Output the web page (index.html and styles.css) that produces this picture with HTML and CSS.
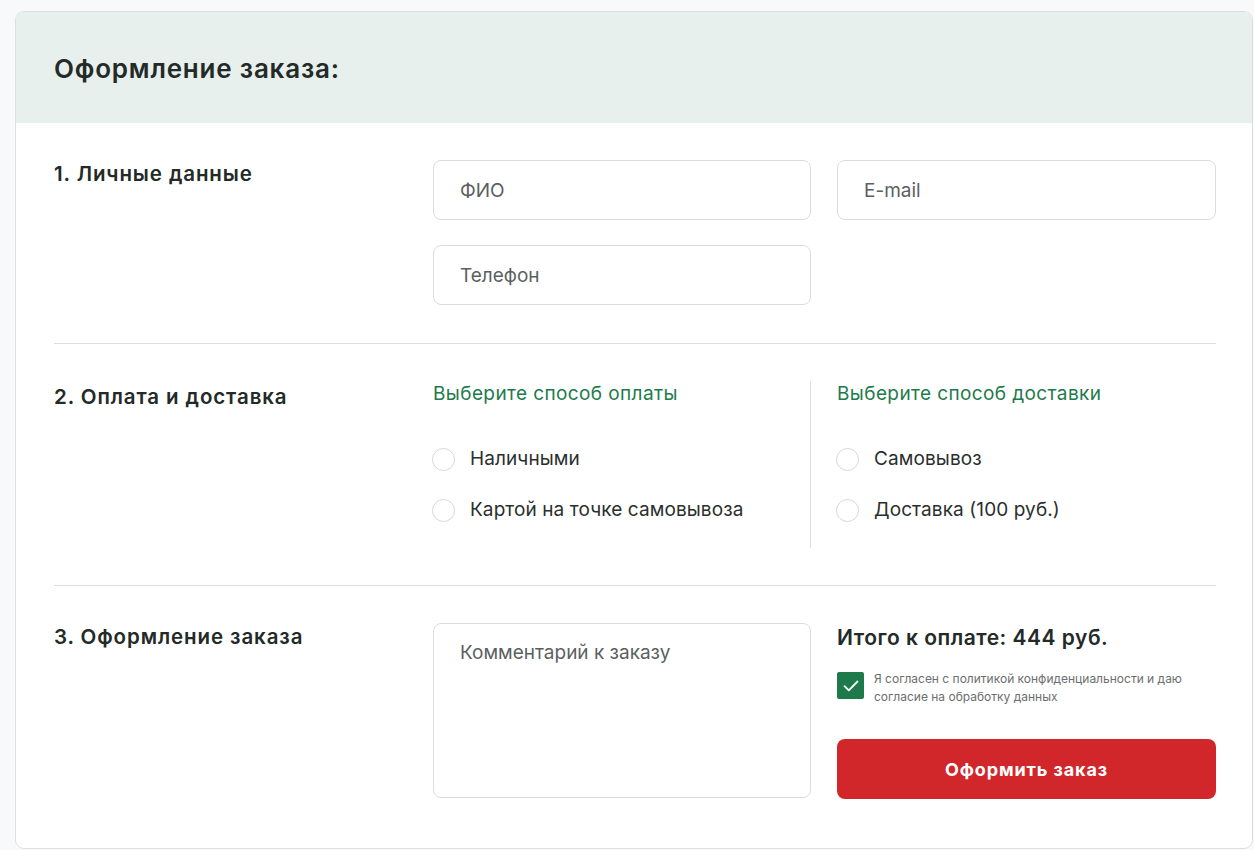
FILE: index.html
```html
<!DOCTYPE html>
<html lang="ru">
<head>
<meta charset="utf-8">
<title>Оформление заказа</title>
<link rel="stylesheet" href="styles.css">
</head>
<body>
<div class="card">
  <div class="card-head">
    <h1 class="title">Оформление заказа:</h1>
  </div>
  <div class="card-body">
    <section class="row row-first">
      <h2 class="row-label">1. Личные данные</h2>
      <div class="field">ФИО</div>
      <div class="field">E-mail</div>
      <div class="field">Телефон</div>
    </section>
    <section class="row row-mid">
      <h2 class="row-label">2. Оплата и доставка</h2>
      <div class="opt-col opt-left">
        <div class="opt-title">Выберите способ оплаты</div>
        <div class="opts">
          <div class="opt"><span class="radio"></span>Наличными</div>
          <div class="opt"><span class="radio"></span>Картой на точке самовывоза</div>
        </div>
      </div>
      <div class="opt-col">
        <div class="opt-title">Выберите способ доставки</div>
        <div class="opts">
          <div class="opt"><span class="radio"></span>Самовывоз</div>
          <div class="opt"><span class="radio"></span>Доставка (100 руб.)</div>
        </div>
      </div>
    </section>
    <section class="row row-last">
      <h2 class="row-label">3. Оформление заказа</h2>
      <div class="field textarea">Комментарий к заказу</div>
      <div class="summary">
        <div class="total">Итого к оплате: 444 руб.</div>
        <div class="agree">
          <span class="check"><svg width="16" height="12" viewBox="0 0 16 12"><path d="M1.5 6.2 L5.8 10.3 L14.5 1.5" fill="none" stroke="#fff" stroke-width="1.8" stroke-linecap="round" stroke-linejoin="round"/></svg></span>
          <span class="agree-text">Я согласен с политикой конфиденциальности и даю согласие на обработку данных</span>
        </div>
        <button class="submit">Оформить заказ</button>
      </div>
    </section>
  </div>
</div>
</body>
</html>
```
FILE: styles.css
```css
* { box-sizing: border-box; }
html, body { margin: 0; padding: 0; }
body {
  background: #f7f9fb;
  font-family: Inter, "Noto Sans", sans-serif;
  color: #262c2a;
  padding: 11px 1px 0 15px;
  height: 850px;
  overflow: hidden;
}
.card {
  background: #fff;
  border: 1px solid #dcdfe0;
  border-radius: 9px;
  overflow: hidden;
  height: 838px;
}
.card-head {
  background: #e7f0ec;
  height: 111px;
  padding: 0 38px;
  display: flex;
  align-items: center;
}
.title {
  margin: 0;
  font-size: 26px;
  font-weight: 600;
  letter-spacing: 0.8px;
  color: #232a27;
  padding-top: 2px;
}
.card-body {
  padding: 0 36px 0 38px;
}
.row {
  display: grid;
  grid-template-columns: 353px 378px 1fr;
  column-gap: 26px;
  row-gap: 25px;
  padding: 37px 0 38px;
  border-bottom: 1px solid #dcdfe0;
  align-items: start;
}
.row-mid { padding-bottom: 37px; }
.row-last { border-bottom: none; }
.row-label {
  margin: 0;
  font-size: 20.5px;
  font-weight: 600;
  color: #232a27;
  letter-spacing: 0.9px;
  line-height: 28px;
}
.row-first .row-label { grid-row: span 2; }
.field {
  height: 60px;
  border: 1px solid #dadcdd;
  border-radius: 8px;
  padding: 0 26px;
  display: flex;
  align-items: center;
  font-size: 19px;
  color: #5c5f5f;
  letter-spacing: 0;
}
.row-mid .row-label { margin-top: 2px; }
.opt-col { min-height: 167px; }
.opt-left { border-right: 1px solid #dcdfe0; }
.opt-title {
  font-size: 19px;
  color: #1e7a4b;
  line-height: 26px;
  letter-spacing: 0.4px;
}
.opts {
  margin-top: 38px;
  display: flex;
  flex-direction: column;
  gap: 23px;
}
.opt {
  display: flex;
  align-items: center;
  font-size: 19px;
  line-height: 28px;
  color: #2a2f2d;
  letter-spacing: 0.1px;
  margin-left: -1px;
}
.radio {
  width: 23px;
  height: 23px;
  border: 1px solid #d6d8d8;
  border-radius: 50%;
  margin-right: 15px;
  flex-shrink: 0;
}
.textarea {
  height: 175px;
  align-items: flex-start;
  padding-top: 17px;
}
.summary { display: flex; flex-direction: column; }
.total {
  font-size: 21px;
  font-weight: 600;
  color: #232a27;
  line-height: 30px;
  letter-spacing: 0.5px;
}
.agree {
  display: flex;
  align-items: flex-start;
  margin-top: 19px;
}
.check {
  width: 27px;
  height: 27px;
  background: #1e7a4b;
  border-radius: 2px;
  display: flex;
  align-items: center;
  justify-content: center;
  flex-shrink: 0;
  margin-right: 10px;
}
.agree-text {
  font-size: 12px;
  line-height: 18px;
  color: #6b6e6e;
  margin-top: -2px;
  max-width: 320px;
}
.submit {
  margin-top: 33px;
  height: 60px;
  border: none;
  border-radius: 8px;
  background: #d1262a;
  color: #fff;
  font-family: inherit;
  font-size: 18px;
  font-weight: 700;
  letter-spacing: 0.9px;
}
```
